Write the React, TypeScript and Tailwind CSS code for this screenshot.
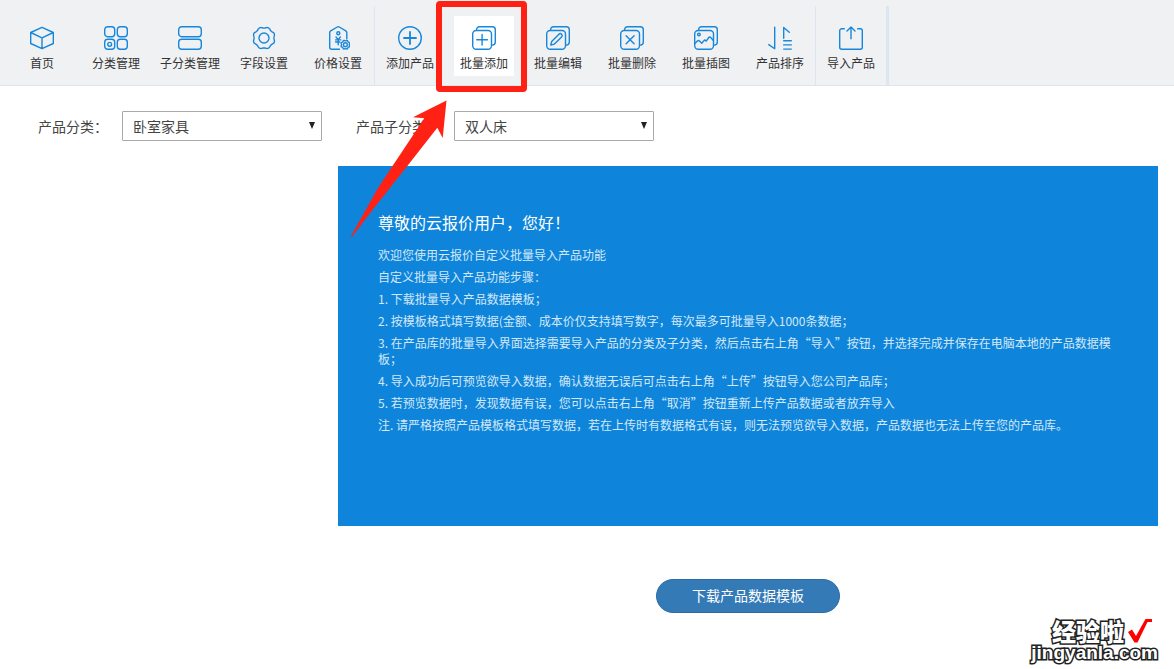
import type { ReactNode } from 'react'

type ToolItem = {
  id: string
  label: string
  icon: ReactNode
}

// outline of a cog with rounded teeth
const cogPath = (cx: number, cy: number, radius: number, depth: number) => {
  const points: string[] = []
  for (let deg = 0; deg < 360; deg += 5) {
    const a = (deg * Math.PI) / 180
    const r = radius - depth * Math.cos(8 * a)
    points.push(`${(cx + r * Math.cos(a)).toFixed(2)} ${(cy + r * Math.sin(a)).toFixed(2)}`)
  }
  return `M${points.join('L')}Z`
}

function Icon({ children }: { children: ReactNode }) {
  return (
    <svg
      viewBox="0 0 24 24"
      className="block size-6 text-[#1787db]"
      fill="none"
      stroke="currentColor"
      strokeWidth="1.4"
      strokeLinecap="round"
      strokeLinejoin="round"
      aria-hidden="true"
    >
      {children}
    </svg>
  )
}

// two stacked sheets shared by all the batch actions
function StackIcon({ children }: { children: ReactNode }) {
  return (
    <Icon>
      <rect x="0.7" y="4.5" width="18.8" height="18.8" rx="3.5" />
      <path d="M4.6 4.4V3.7a3 3 0 0 1 3-3h12.7a3 3 0 0 1 3 3v12.4a3 3 0 0 1-3 3h-.6" />
      {children}
    </Icon>
  )
}

const manageTools: ToolItem[] = [
  {
    id: 'home',
    label: '首页',
    icon: (
      <Icon>
        <path d="M12 1.3l11.3 5.2v11L12 22.7.7 17.5v-11zM.7 6.5L12 11.8l11.3-5.3M12 11.8v10.9" />
      </Icon>
    ),
  },
  {
    id: 'category',
    label: '分类管理',
    icon: (
      <Icon>
        <rect x="0.7" y="0.7" width="10" height="10" rx="3" />
        <rect x="13.3" y="0.7" width="10" height="10" rx="3" />
        <rect x="0.7" y="13.3" width="10" height="10" rx="3" />
        <rect x="13.3" y="13.3" width="10" height="10" rx="3" />
        <circle cx="5.7" cy="18.3" r="1.9" />
      </Icon>
    ),
  },
  {
    id: 'subcategory',
    label: '子分类管理',
    icon: (
      <Icon>
        <rect x="0.7" y="0.7" width="22.6" height="10" rx="3" />
        <rect x="0.7" y="13.3" width="22.6" height="10" rx="3" />
      </Icon>
    ),
  },
  {
    id: 'field',
    label: '字段设置',
    icon: (
      <Icon>
        <path d={cogPath(12, 12, 10.5, 0.6)} />
        <circle cx="12" cy="12" r="5" />
      </Icon>
    ),
  },
  {
    id: 'price',
    label: '价格设置',
    icon: (
      <Icon>
        <path d="M13.5 23.3H5.7a2 2 0 0 1-2-2V6.6a2 2 0 0 1 1-1.7L11.3 1a2 2 0 0 1 2 0l6.5 3.9a2 2 0 0 1 1 1.7v6.2" />
        <circle cx="12.3" cy="7.3" r="1.5" />
        <path d="M10 11l2.2 2.6 2.2-2.6M9.6 13.9h5.2M9.6 16h4.2M12.2 13.6v5.2" />
        <path d={cogPath(19.4, 18.7, 4.2, 0.4)} />
        <circle cx="19.4" cy="18.7" r="1.9" />
      </Icon>
    ),
  },
]

const productTools: ToolItem[] = [
  {
    id: 'add',
    label: '添加产品',
    icon: (
      <Icon>
        <circle cx="12" cy="12" r="11.3" />
        <path d="M12 6v12M6 12h12" strokeWidth="1.8" />
      </Icon>
    ),
  },
  {
    id: 'batch-add',
    label: '批量添加',
    icon: (
      <StackIcon>
        <path d="M10.1 8.4v10.600M4.800 13.700h10.600" />
      </StackIcon>
    ),
  },
  {
    id: 'batch-edit',
    label: '批量编辑',
    icon: (
      <StackIcon>
        <path d="M4.8 19l.9-3.6 7.2-7.2a1.900 1.900 0 0 1 2.700 2.700l-7.200 7.200z" />
      </StackIcon>
    ),
  },
  {
    id: 'batch-delete',
    label: '批量删除',
    icon: (
      <StackIcon>
        <path d="M6.1 9.8l8 8M14.1 9.8l-8 8" />
      </StackIcon>
    ),
  },
  {
    id: 'batch-image',
    label: '批量插图',
    icon: (
      <StackIcon>
        <circle cx="4.9" cy="8.5" r="1.3" />
        <path d="M.8 17.6l2.6-2.7a1.5 1.5 0 0 1 2.1 0l2.3 2.3 2.8-3.3 1.6 1.2 2.6-3.6a1.2 1.2 0 0 1 1.9 0l2.7 3" />
      </StackIcon>
    ),
  },
  {
    id: 'sort',
    label: '产品排序',
    icon: (
      <Icon>
        <path d="M6.7 1.3v21.4L.8 18.6M15.7 12.3V1.5l5.6 4.8M15.7 14.7h7.6M15.7 18.9h7.6M15.7 23.1h7.6" />
      </Icon>
    ),
  },
]

const importTools: ToolItem[] = [
  {
    id: 'import',
    label: '导入产品',
    icon: (
      <Icon>
        <path d="M5.3 2.8H2.7a2 2 0 0 0-2 2v16.5a2 2 0 0 0 2 2h18.6a2 2 0 0 0 2-2V4.8a2 2 0 0 0-2-2h-2.6" />
        <path d="M12 12.7V.9M8 4.9l4-4 4 4" />
      </Icon>
    ),
  },
]

const steps = [
  '欢迎您使用云报价自定义批量导入产品功能',
  '自定义批量导入产品功能步骤：',
  '1. 下载批量导入产品数据模板；',
  '2. 按模板格式填写数据(金额、成本价仅支持填写数字，每次最多可批量导入1000条数据；',
  '3. 在产品库的批量导入界面选择需要导入产品的分类及子分类，然后点击右上角“导入”按钮，并选择完成并保存在电脑本地的产品数据模板；',
  '4. 导入成功后可预览欲导入数据，确认数据无误后可点击右上角“上传”按钮导入您公司产品库；',
  '5. 若预览数据时，发现数据有误，您可以点击右上角“取消”按钮重新上传产品数据或者放弃导入',
  '注. 请严格按照产品模板格式填写数据，若在上传时有数据格式有误，则无法预览欲导入数据，产品数据也无法上传至您的产品库。',
]

// red frame and arrow that point out the current tool
function Highlight() {
  return (
    <span className="pointer-events-none absolute -top-[15px] -left-[18px] z-10 block size-[91px] rounded-[4px] border-[6px] border-[#ff2113]">
      <svg
        viewBox="0 0 100 140"
        className="absolute top-[92px] -left-[92px] h-[140px] w-[100px] max-w-none"
        fill="#ff2113"
        aria-hidden="true"
      >
        <path d="M96.5 1.500L63 18.300l11.300 1L42.700 66.700 27.700 89.500 1 137.200q-.3 1.600 1.200.4L21 112.700 57.500 66.700 87.300 28.700 92.700 38.900z" />
      </svg>
    </span>
  )
}

function ToolGroup({ items, className, activeId }: { items: ToolItem[]; className: string; activeId?: string }) {
  return (
    <div className={`flex gap-3.5 border-[#dbe6f1] pt-2.5 ${className}`}>
      {items.map((item) => (
        <button
          key={item.id}
          type="button"
          className={`relative flex h-[60px] w-[60px] flex-col items-center gap-[5px] pt-2.5 text-xs whitespace-nowrap text-[#333] ${
            item.id === activeId ? 'bg-white' : ''
          }`}
        >
          {item.icon}
          <span>{item.label}</span>
          {item.id === activeId && <Highlight />}
        </button>
      ))}
    </div>
  )
}

function SelectField({ id, label, options }: { id: string; label: string; options: string[] }) {
  return (
    <div className="flex items-center gap-3.5">
      <label htmlFor={id} className="text-sm text-[#444]">
        {label}
      </label>
      <div className="relative">
        <select
          id={id}
          className="block h-[30px] w-[200px] appearance-none rounded-[1px] border border-[#a9a9a9] bg-white px-2.5 text-sm text-[#444]"
        >
          {options.map((option) => (
            <option key={option}>{option}</option>
          ))}
        </select>
        <svg
          viewBox="0 0 6 7"
          className="pointer-events-none absolute top-[11px] right-[7px] h-[7px] w-[6px]"
          fill="#222"
          aria-hidden="true"
        >
          <path d="M0 0h6L3 7z" />
        </svg>
      </div>
    </div>
  )
}

function App() {
  return (
    <div
      lang="zh-CN"
      className="flex min-h-screen flex-col bg-white font-['Noto_Sans_CJK_SC','Noto_Sans',sans-serif]"
    >
      <header className="flex h-[86px] border-b border-[#dbe6f1] bg-[#f0f1f3] pt-1.5 pl-1.5">
        <ToolGroup items={manageTools} className="border-r px-1.5" />
        <ToolGroup items={productTools} className="border-r px-[5px]" activeId="batch-add" />
        <ToolGroup items={importTools} className="border-r-[3px] px-[5px]" />
      </header>

      <main>
        <div className="flex flex-wrap gap-x-[34px] gap-y-3 px-[38px] pt-[25px]">
          <SelectField id="category" label="产品分类：" options={['卧室家具']} />
          <SelectField id="subcategory" label="产品子分类：" options={['双人床']} />
        </div>

        <section className="mt-[25px] mr-4 ml-[338px]">
          <div className="min-h-[360px] bg-[#0e84da] px-10 py-11">
            <h1 className="mb-[13px] text-base text-white">尊敬的云报价用户，您好！</h1>
            <div className="space-y-1.5">
              {steps.map((step) => (
                <p key={step} className="text-xs text-[#d3e8f9]">
                  {step}
                </p>
              ))}
            </div>
          </div>
          <div className="mt-[53px] flex justify-center">
            <button
              type="button"
              className="h-[34px] w-[184px] rounded-full border border-[#2e6da4] bg-[#337ab7] pb-0.5 text-sm text-white"
            >
              下载产品数据模板
            </button>
          </div>
        </section>
      </main>

      <footer className="mt-auto mr-4 mb-1.5 self-end text-white [paint-order:stroke_fill] [-webkit-text-stroke:3px_#222]">
        <div className="flex items-center justify-end gap-1 pr-1.5">
          <span className="text-2xl leading-6 font-black">经验啦</span>
          <svg viewBox="0 0 24 24" className="size-6" fill="#f00" aria-hidden="true">
            <path d="M0 13l4-2.500 4 6.500L17.500 0H24v3h-4.500L9.500 23.500H6.500z" />
          </svg>
        </div>
        <div className="font-['Liberation_Sans',sans-serif] text-[19px] leading-5 font-bold">jingyanla.com</div>
      </footer>
    </div>
  )
}

export default App
